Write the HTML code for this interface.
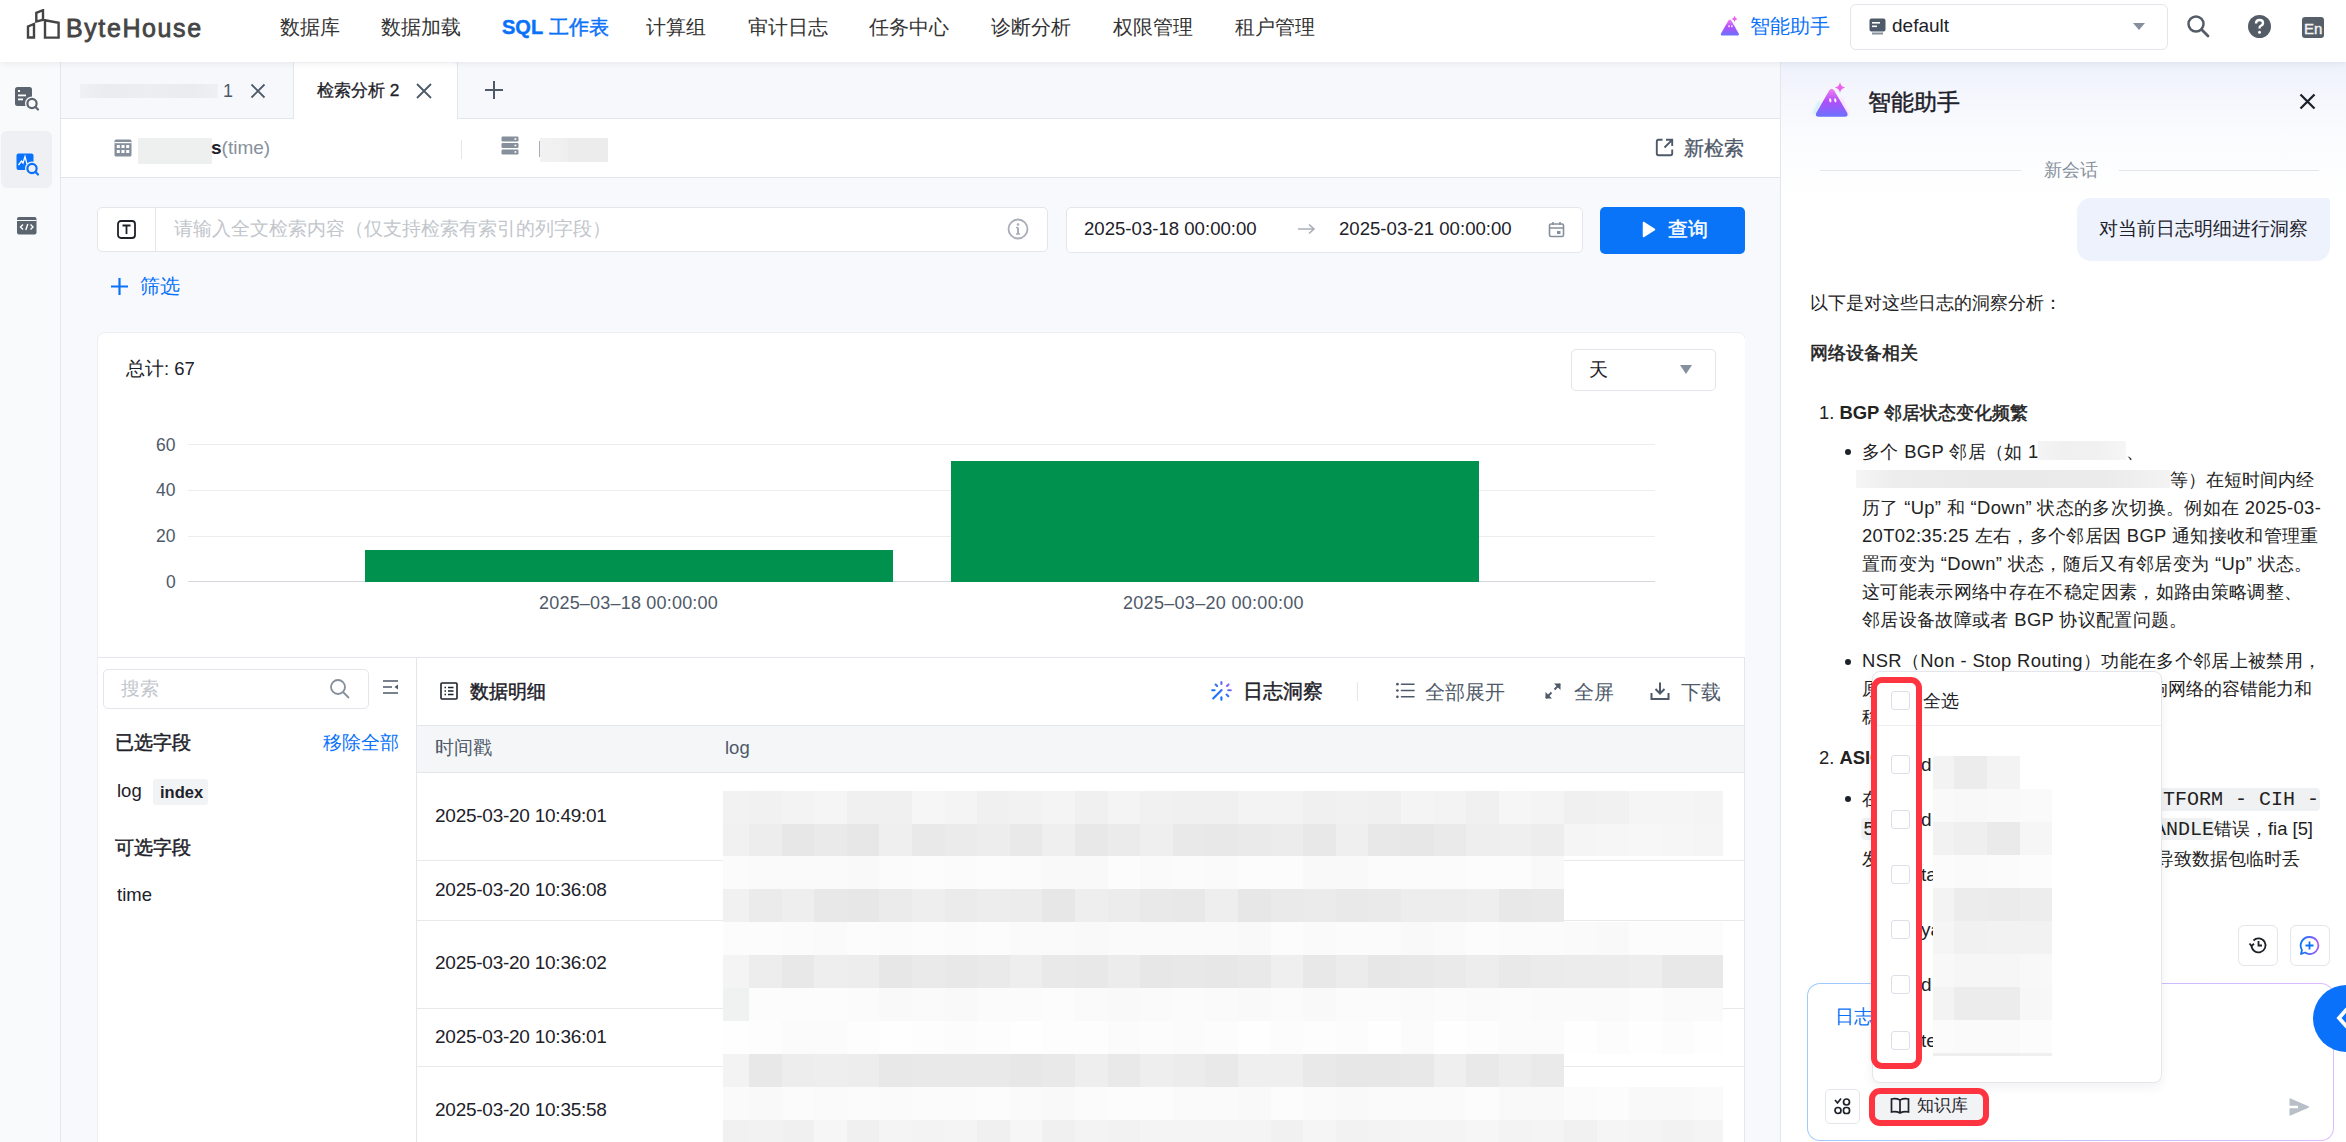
<!DOCTYPE html>
<html><head><meta charset="utf-8">
<style>
*{box-sizing:border-box;margin:0;padding:0}
html,body{width:2346px;height:1142px;overflow:hidden}
body{position:relative;background:#f7f9fc;font-family:"Liberation Sans",sans-serif;color:#1d2129}
.a{position:absolute}
.t{position:absolute;white-space:nowrap;line-height:1}
svg{display:block;position:absolute}
.mz div{position:absolute}
</style></head><body>

<!-- TOP NAV -->
<div class="a" style="left:0;top:0;width:2346px;height:62px;background:#fff;box-shadow:0 2px 6px rgba(0,0,0,0.06);z-index:5">
  <svg style="left:26px;top:9px" width="34" height="30" viewBox="0 0 34 30">
    <path d="M2 28.5V17.5L8 15V28.5Z M10.3 12.5 V3.8 L17 1.2 V10.8 Z M19 11.3 L32.6 13.8 V28.6 H19 Z" fill="none" stroke="#444" stroke-width="2.4"/>
  </svg>
  <div class="t" style="left:66px;top:15.5px;font-size:25px;color:#454545;-webkit-text-stroke:0.8px #454545;letter-spacing:1.6px">ByteHouse</div>
  <div class="t" style="left:280px;top:17px;font-size:20px;color:#333">数据库</div>
  <div class="t" style="left:381px;top:17px;font-size:20px;color:#333">数据加载</div>
  <div class="t" style="left:502px;top:17px;font-size:20px;color:#0a72fa;font-weight:normal;-webkit-text-stroke:0.45px currentColor"><b>SQL</b> 工作表</div>
  <div class="t" style="left:646px;top:17px;font-size:20px;color:#333">计算组</div>
  <div class="t" style="left:748px;top:17px;font-size:20px;color:#333">审计日志</div>
  <div class="t" style="left:869px;top:17px;font-size:20px;color:#333">任务中心</div>
  <div class="t" style="left:991px;top:17px;font-size:20px;color:#333">诊断分析</div>
  <div class="t" style="left:1113px;top:17px;font-size:20px;color:#333">权限管理</div>
  <div class="t" style="left:1235px;top:17px;font-size:20px;color:#333">租户管理</div>

  <svg style="left:1718px;top:14px" width="24" height="24" viewBox="0 0 42 40">
    <defs><linearGradient id="lg1" x1="0" y1="0" x2="0" y2="1"><stop offset="0" stop-color="#f27ef2"/><stop offset="0.45" stop-color="#b24ef8"/><stop offset="1" stop-color="#6a72ff"/></linearGradient></defs>
    <path d="M18.2 10.5 Q20.7 6.8 23.2 10.5 L36 32.5 Q38 36.7 33.5 36.7 H8 Q3.5 36.7 5.5 32.5 Z" fill="url(#lg1)"/>
    <ellipse cx="19.3" cy="20.3" rx="1.1" ry="2.1" fill="#fff"/><ellipse cx="24.3" cy="20.3" rx="1.1" ry="2.1" fill="#fff"/>
    <path d="M29 2.2 Q29.8 6.8 34.3 7.6 Q29.8 8.4 29 13 Q28.2 8.4 23.7 7.6 Q28.2 6.8 29 2.2Z" fill="#ec5ef0"/>
  </svg>
  <div class="t" style="left:1750px;top:16px;font-size:20px;color:#0a72fa">智能助手</div>

  <div class="a" style="left:1850px;top:4px;width:318px;height:46px;border:1px solid #e5e6eb;border-radius:6px;background:#fff"></div>
  <svg style="left:1869px;top:18px" width="17" height="17" viewBox="0 0 17 17"><rect x="0.5" y="0.5" width="16" height="13" rx="2" fill="#4e5969"/><rect x="3" y="4" width="8" height="1.6" fill="#fff"/><rect x="3" y="7.5" width="5" height="1.6" fill="#fff"/><rect x="3" y="14.5" width="11" height="2" fill="#86909c"/></svg>
  <div class="t" style="left:1892px;top:16px;font-size:19px;color:#1d2129">default</div>
  <svg style="left:2132px;top:22px" width="14" height="9" viewBox="0 0 14 9"><path d="M1 1H13L7 8Z" fill="#86909c"/></svg>

  <svg style="left:2186px;top:14px" width="26" height="26" viewBox="0 0 26 26"><circle cx="10" cy="10" r="7.5" fill="none" stroke="#545d67" stroke-width="2.5"/><path d="M15.5 15.5 L22 22" stroke="#545d67" stroke-width="2.8" stroke-linecap="round"/></svg>
  <svg style="left:2247px;top:14px" width="25" height="25" viewBox="0 0 25 25"><circle cx="12.5" cy="12.5" r="11.5" fill="#545d67"/><path d="M9 9.5 Q9 6 12.5 6 Q16 6 16 9 Q16 11 13.5 12 Q12.5 12.5 12.5 14.5" fill="none" stroke="#fff" stroke-width="2.4"/><circle cx="12.5" cy="18.3" r="1.5" fill="#fff"/></svg>
  <div class="a" style="left:2302px;top:17px;width:22px;height:21px;background:#565f69;border-radius:3px"></div>
  <div class="t" style="left:2304px;top:21px;font-size:15px;color:#f4f4f4;-webkit-text-stroke:0.4px #f4f4f4">En</div>
</div>

<!-- LEFT SIDEBAR -->
<div class="a" style="left:0;top:62px;width:61px;height:1080px;background:#f9fafb;border-right:1px solid #e5e6eb"></div>
<svg style="left:14px;top:86px" width="26" height="26" viewBox="0 0 26 26">
  <rect x="1" y="1" width="17" height="19" rx="2.5" fill="#5c6470"/>
  <rect x="4" y="4" width="2" height="2" fill="#fff"/><rect x="4" y="8.5" width="8" height="1.8" fill="#fff"/><rect x="4" y="12.5" width="5" height="1.8" fill="#fff"/>
  <circle cx="18" cy="17.5" r="7" fill="#f9fafb"/><circle cx="18" cy="17.5" r="4.6" fill="none" stroke="#5c6470" stroke-width="2.2"/><path d="M21.3 20.8 L24 23.5" stroke="#5c6470" stroke-width="2.2" stroke-linecap="round"/>
</svg>
<div class="a" style="left:1px;top:131px;width:51px;height:57px;background:#eef0f4;border-radius:6px"></div>
<svg style="left:15px;top:152px" width="26" height="26" viewBox="0 0 26 26">
  <rect x="1.5" y="1.5" width="17" height="16.5" rx="2" fill="#0a72fa"/>
  <path d="M3.5 13 L6.5 9 L8 11 L10 4.5 L12 12" fill="none" stroke="#fff" stroke-width="1.3"/>
  <circle cx="17" cy="16.5" r="7" fill="#eef0f4"/><circle cx="17" cy="16.5" r="4.6" fill="none" stroke="#0a72fa" stroke-width="2.2"/><path d="M20.3 19.8 L23 22.5" stroke="#0a72fa" stroke-width="2.2" stroke-linecap="round"/>
</svg>
<svg style="left:16px;top:216px" width="22" height="20" viewBox="0 0 22 20">
  <rect x="1" y="1" width="19.5" height="17.5" rx="2" fill="#5c6470"/>
  <rect x="1" y="4" width="19.5" height="1" fill="#f9fafb"/>
  <path d="M7 8.5 L4.5 11 L7 13.5 M14.5 8.5 L17 11 L14.5 13.5 M11.8 8 L9.8 14" fill="none" stroke="#fff" stroke-width="1.4"/>
</svg>

<!-- TABS -->
<div class="a" style="left:61px;top:62px;width:1719px;height:57px;background:#f6f8fb;border-bottom:1px solid #e2e5ea"></div>
<div class="a" style="left:294px;top:63px;width:164px;height:57px;background:#fff;border-radius:0 6px 0 0"></div>
<div class="a" style="left:293px;top:62px;width:1px;height:57px;background:#e5e6eb"></div>
<div class="a" style="left:457px;top:62px;width:1px;height:57px;background:#e5e6eb"></div>
<div class="a" style="left:80px;top:84px;width:138px;height:14px;background:linear-gradient(90deg,#eff1f4,#e9ebee 20%,#eceef1 50%,#e9ebef 80%,#eef0f3)"></div>
<div class="t" style="left:223px;top:82px;font-size:18px;color:#4e5969">1</div>
<svg style="left:250px;top:83px" width="16" height="16" viewBox="0 0 16 16"><path d="M1.5 1.5 L14.5 14.5 M14.5 1.5 L1.5 14.5" stroke="#4e5969" stroke-width="1.8"/></svg>
<div class="t" style="left:317px;top:82px;font-size:17.3px;color:#1d2129;-webkit-text-stroke:0.3px currentColor">检索分析 2</div>
<svg style="left:416px;top:83px" width="16" height="16" viewBox="0 0 16 16"><path d="M1 1 L15 15 M15 1 L1 15" stroke="#4e5969" stroke-width="1.8"/></svg>
<svg style="left:484px;top:80px" width="20" height="20" viewBox="0 0 20 20"><path d="M10 1 V19 M1 10 H19" stroke="#4e5969" stroke-width="2"/></svg>

<!-- ROW 2 -->
<div class="a" style="left:61px;top:119px;width:1719px;height:59px;background:#fff;border-bottom:1px solid #e2e5ea"></div>
<svg style="left:114px;top:139px" width="18" height="18" viewBox="0 0 18 18"><rect x="0.5" y="0.5" width="17" height="17" rx="1.5" fill="#86909c"/><rect x="0.5" y="3" width="17" height="1.2" fill="#fff"/><g fill="#fff"><rect x="2.8" y="6" width="3" height="3"/><rect x="7.5" y="6" width="3" height="3"/><rect x="12.2" y="6" width="3" height="3"/><rect x="2.8" y="11" width="3" height="3"/><rect x="7.5" y="11" width="3" height="3"/><rect x="12.2" y="11" width="3" height="3"/></g></svg>
<div class="a" style="left:138px;top:138px;width:74px;height:26px;background:#eeefef"></div>
<div class="t" style="left:211px;top:138px;font-size:19px;color:#1d2129;font-weight:bold">s<span style="font-weight:normal;color:#86909c">(time)</span></div>
<div class="a" style="left:461px;top:140px;width:1px;height:19px;background:#e5e6eb"></div>
<svg style="left:501px;top:136px" width="18" height="19" viewBox="0 0 18 19"><g fill="#86909c"><rect x="0.5" y="0.5" width="17" height="5" rx="1.2"/><rect x="0.5" y="7" width="17" height="5" rx="1.2"/><rect x="0.5" y="13.5" width="17" height="5" rx="1.2"/></g><g fill="#fff"><rect x="13.5" y="2.2" width="1.8" height="1.6"/><rect x="13.5" y="8.7" width="1.8" height="1.6"/><rect x="13.5" y="15.2" width="1.8" height="1.6"/></g></svg>
<div class="a" style="left:539px;top:141px;width:1px;height:16px;background:#a9aeb6"></div>
<div class="a" style="left:540px;top:138px;width:68px;height:24px;background:linear-gradient(90deg,#f2f2f2,#efefef 40%,#ececec 41%,#ececec)"></div>
<svg style="left:1655px;top:138px" width="19" height="19" viewBox="0 0 19 19"><path d="M7.5 1.8 H3.5 Q1.8 1.8 1.8 3.5 V15.5 Q1.8 17.2 3.5 17.2 H15.5 Q17.2 17.2 17.2 15.5 V11.5" fill="none" stroke="#4e5969" stroke-width="1.9"/><path d="M11 1.8 H17.2 V8 M17.2 1.8 L9.5 9.5" fill="none" stroke="#4e5969" stroke-width="1.9"/></svg>
<div class="t" style="left:1684px;top:138px;font-size:20px;color:#4e5969;-webkit-text-stroke:0.3px currentColor">新检索</div>
<!-- SEARCH ROW -->
<div class="a" style="left:97px;top:207px;width:951px;height:45px;background:#fff;border:1px solid #e5e6eb;border-radius:5px"></div>
<div class="a" style="left:155px;top:208px;width:1px;height:43px;background:#e5e6eb"></div>
<svg style="left:117px;top:220px" width="19" height="19" viewBox="0 0 19 19"><rect x="1" y="1" width="17" height="17" rx="3" fill="none" stroke="#1d2129" stroke-width="1.8"/><path d="M5.5 5.5 H13.5 M9.5 5.5 V14" stroke="#1d2129" stroke-width="1.8"/></svg>
<div class="t" style="left:174px;top:220px;font-size:18.5px;color:#c2c6cc">请输入全文检索内容（仅支持检索有索引的列字段）</div>
<svg style="left:1007px;top:218px" width="22" height="22" viewBox="0 0 22 22"><circle cx="11" cy="11" r="9.5" fill="none" stroke="#a9aeb8" stroke-width="1.8"/><circle cx="11" cy="6.5" r="1.3" fill="#a9aeb8"/><path d="M11 9.5 V16" stroke="#a9aeb8" stroke-width="2"/><path d="M9 9.5 H11 M9 16 H13" stroke="#a9aeb8" stroke-width="1.5"/></svg>

<div class="a" style="left:1066px;top:207px;width:517px;height:46px;background:#fff;border:1px solid #e5e6eb;border-radius:5px"></div>
<div class="t" style="left:1084px;top:220px;font-size:18.6px;color:#1d2129">2025-03-18 00:00:00</div>
<svg style="left:1297px;top:222px" width="19" height="14" viewBox="0 0 19 14"><path d="M1 7 H17 M12 2.5 L17 7 L12 11.5" fill="none" stroke="#a9aeb8" stroke-width="1.6"/></svg>
<div class="t" style="left:1339px;top:220px;font-size:18.6px;color:#1d2129">2025-03-21 00:00:00</div>
<svg style="left:1548px;top:221px" width="17" height="17" viewBox="0 0 17 17"><rect x="1.5" y="3" width="14" height="12.5" rx="1.5" fill="none" stroke="#86909c" stroke-width="1.6"/><path d="M1.5 7 H15.5 M5 1 V4 M12 1 V4" stroke="#86909c" stroke-width="1.6"/><rect x="9" y="10" width="3.5" height="3" fill="#86909c"/></svg>

<div class="a" style="left:1600px;top:207px;width:145px;height:47px;background:#0a74f8;border-radius:5px"></div>
<svg style="left:1642px;top:221px" width="14" height="17" viewBox="0 0 14 17"><path d="M1.5 1.5 L12.5 8.5 L1.5 15.5 Z" fill="#fff" stroke="#fff" stroke-width="1.5" stroke-linejoin="round"/></svg>
<div class="t" style="left:1668px;top:219px;font-size:20px;color:#fff;font-weight:normal;-webkit-text-stroke:0.45px currentColor">查询</div>

<svg style="left:110px;top:277px" width="19" height="19" viewBox="0 0 19 19"><path d="M9.5 1 V18 M1 9.5 H18" stroke="#0a72fa" stroke-width="2.2"/></svg>
<div class="t" style="left:140px;top:276px;font-size:20px;color:#0a72fa">筛选</div>

<!-- MAIN CARD -->
<div class="a" style="left:97px;top:332px;width:1649px;height:830px;background:#fff;border:1px solid #eceef2;border-radius:8px"></div>
<div class="t" style="left:126px;top:360px;font-size:18.5px;color:#1d2129">总计: 67</div>
<div class="a" style="left:1571px;top:349px;width:145px;height:42px;background:#fff;border:1px solid #e5e6eb;border-radius:5px"></div>
<div class="t" style="left:1589px;top:360px;font-size:19px;color:#1d2129">天</div>
<svg style="left:1679px;top:364px" width="14" height="11" viewBox="0 0 14 11"><path d="M1 1H13L7 10Z" fill="#86909c"/></svg>

<!-- CHART -->
<div class="a" style="left:188px;top:444px;width:1467px;height:1px;background:#ebedf0"></div>
<div class="a" style="left:188px;top:490px;width:1467px;height:1px;background:#ebedf0"></div>
<div class="a" style="left:188px;top:536px;width:1467px;height:1px;background:#ebedf0"></div>
<div class="a" style="left:188px;top:581px;width:1467px;height:1px;background:#d5d8e0"></div>
<div class="t" style="left:156px;top:437px;font-size:17.5px;color:#4e5969">60</div>
<div class="t" style="left:156px;top:482px;font-size:17.5px;color:#4e5969">40</div>
<div class="t" style="left:156px;top:528px;font-size:17.5px;color:#4e5969">20</div>
<div class="t" style="left:166px;top:574px;font-size:17.5px;color:#4e5969">0</div>
<div class="a" style="left:365px;top:550px;width:528px;height:32px;background:#00914e"></div>
<div class="a" style="left:951px;top:461px;width:528px;height:121px;background:#00914e"></div>
<div class="t" style="left:539px;top:594px;font-size:18px;color:#4e5969;letter-spacing:0.2px">2025–03–18 00:00:00</div>
<div class="t" style="left:1123px;top:594px;font-size:18px;color:#4e5969;letter-spacing:0.3px">2025–03–20 00:00:00</div>

<!-- BOTTOM -->
<div class="a" style="left:98px;top:657px;width:1647px;height:1px;background:#e5e6eb"></div>
<div class="a" style="left:416px;top:658px;width:1px;height:484px;background:#e5e6eb"></div>
<div class="a" style="left:103px;top:669px;width:266px;height:40px;background:#fff;border:1px solid #e5e6eb;border-radius:5px"></div>
<div class="t" style="left:121px;top:680px;font-size:18.5px;color:#c2c6cc">搜索</div>
<svg style="left:329px;top:678px" width="22" height="22" viewBox="0 0 22 22"><circle cx="9" cy="9" r="7" fill="none" stroke="#86909c" stroke-width="1.8"/><path d="M14 14 L20 20" stroke="#86909c" stroke-width="1.8"/></svg>
<svg style="left:382px;top:679px" width="17" height="16" viewBox="0 0 17 16"><path d="M1 2 H16 M1 8 H10 M1 14 H16" stroke="#4e5969" stroke-width="1.6"/><path d="M16 5.5 L12.5 8 L16 10.5Z" fill="#4e5969"/></svg>
<div class="t" style="left:115px;top:734px;font-size:18.5px;color:#1d2129;font-weight:normal;-webkit-text-stroke:0.45px currentColor">已选字段</div>
<div class="t" style="left:323px;top:734px;font-size:18.5px;color:#0a72fa">移除全部</div>
<div class="t" style="left:117px;top:782px;font-size:18.5px;color:#1d2129">log</div>
<div class="a" style="left:153px;top:779px;width:55px;height:26px;background:#f2f3f5;border-radius:3px"></div>
<div class="t" style="left:160px;top:784px;font-size:16.5px;color:#1d2129;font-weight:bold">index</div>
<div class="t" style="left:115px;top:839px;font-size:18.5px;color:#1d2129;font-weight:normal;-webkit-text-stroke:0.45px currentColor">可选字段</div>
<div class="t" style="left:117px;top:886px;font-size:18.5px;color:#1d2129">time</div>

<svg style="left:440px;top:682px" width="18" height="18" viewBox="0 0 18 18"><rect x="1" y="1" width="16" height="16" rx="1" fill="none" stroke="#1d2129" stroke-width="1.6"/><path d="M4.5 5.5 H6 M8 5.5 H13.5 M4.5 9 H6 M8 9 H13.5 M4.5 12.5 H6 M8 12.5 H13.5" stroke="#1d2129" stroke-width="1.5"/></svg>
<div class="t" style="left:470px;top:682px;font-size:19px;color:#1d2129;font-weight:normal;-webkit-text-stroke:0.45px currentColor">数据明细</div>

<svg style="left:1209px;top:679px" width="24" height="24" viewBox="0 0 24 24">
  <defs><linearGradient id="lg2" gradientUnits="userSpaceOnUse" x1="4" y1="20" x2="22" y2="4"><stop offset="0" stop-color="#0a72fa"/><stop offset="0.5" stop-color="#2f6ef8"/><stop offset="1" stop-color="#b060f6"/></linearGradient></defs>
  <g stroke="url(#lg2)" stroke-width="2.1" stroke-linecap="round" fill="none"><path d="M12.4 3 V5"/><path d="M6.6 5.6 L8.1 7.1"/><path d="M19.6 5.4 L18 7"/><path d="M3.2 11.2 H5.6"/><path d="M19.2 11.2 H21.8"/><path d="M17.6 15.6 L19.3 17.3"/><path d="M12.4 18.2 V20.8"/><path d="M4.2 19.4 L12.6 11"/></g>
</svg>
<div class="t" style="left:1243px;top:682px;font-size:19.5px;color:#1d2129;font-weight:normal;-webkit-text-stroke:0.45px currentColor">日志洞察</div>
<div class="a" style="left:1357px;top:682px;width:1px;height:19px;background:#e5e6eb"></div>
<svg style="left:1396px;top:682px" width="19" height="17" viewBox="0 0 19 17"><g fill="#4e5969"><circle cx="1.4" cy="2.2" r="1.35"/><circle cx="1.4" cy="8.5" r="1.35"/><circle cx="1.4" cy="14.8" r="1.35"/></g><path d="M5.5 2.2 H18 M5.5 8.5 H18 M5.5 14.8 H18" stroke="#4e5969" stroke-width="1.6" stroke-linecap="round"/></svg>
<div class="t" style="left:1425px;top:682px;font-size:20px;color:#4e5969">全部展开</div>
<svg style="left:1544px;top:682px" width="18" height="18" viewBox="0 0 18 18"><path d="M10.5 7.5 L16 2 M2 16 L7.5 10.5" stroke="#4e5969" stroke-width="1.8"/><path d="M10 1.5 H16.5 V8 Z M1.5 10 V16.5 H8 Z" fill="#4e5969"/></svg>
<div class="t" style="left:1574px;top:682px;font-size:20px;color:#4e5969">全屏</div>
<svg style="left:1650px;top:681px" width="20" height="20" viewBox="0 0 20 20"><path d="M10 1.5 V12.5 M5.5 8 L10 12.5 L14.5 8 M1.5 12 V18 H18.5 V12" fill="none" stroke="#4e5969" stroke-width="2"/></svg>
<div class="t" style="left:1681px;top:682px;font-size:20px;color:#4e5969">下载</div>

<div class="a" style="left:417px;top:725px;width:1328px;height:48px;background:#f5f6f8;border-top:1px solid #e5e6eb;border-bottom:1px solid #e5e6eb"></div>
<div class="t" style="left:435px;top:739px;font-size:18.5px;color:#4e5969">时间戳</div>
<div class="t" style="left:725px;top:739px;font-size:18.5px;color:#4e5969">log</div>
<div class="a" style="left:417px;top:860px;width:1328px;height:1px;background:#e8e9ec"></div>
<div class="a" style="left:417px;top:920px;width:1328px;height:1px;background:#e8e9ec"></div>
<div class="a" style="left:417px;top:1008px;width:1328px;height:1px;background:#e8e9ec"></div>
<div class="a" style="left:417px;top:1066px;width:1328px;height:1px;background:#e8e9ec"></div>
<div class="t" style="left:435px;top:806px;font-size:19px;color:#1d2129;letter-spacing:-0.25px">2025-03-20 10:49:01</div>
<div class="t" style="left:435px;top:880px;font-size:19px;color:#1d2129;letter-spacing:-0.25px">2025-03-20 10:36:08</div>
<div class="t" style="left:435px;top:953px;font-size:19px;color:#1d2129;letter-spacing:-0.25px">2025-03-20 10:36:02</div>
<div class="t" style="left:435px;top:1027px;font-size:19px;color:#1d2129;letter-spacing:-0.25px">2025-03-20 10:36:01</div>
<div class="t" style="left:435px;top:1100px;font-size:19px;color:#1d2129;letter-spacing:-0.25px">2025-03-20 10:35:58</div>
<div class="a" style="left:1745px;top:178px;width:35px;height:964px;background:#f7f9fc"></div>
<div class="a" style="left:1744px;top:657px;width:1px;height:485px;background:#e5e6eb"></div>
<div class="mz">
<div style="left:723px;top:791px;width:26px;height:33px;background:rgb(242,242,243)"></div>
<div style="left:749px;top:791px;width:33px;height:33px;background:rgb(241,241,242)"></div>
<div style="left:782px;top:791px;width:33px;height:33px;background:rgb(243,243,244)"></div>
<div style="left:814px;top:791px;width:33px;height:33px;background:rgb(245,245,246)"></div>
<div style="left:847px;top:791px;width:33px;height:33px;background:rgb(240,240,241)"></div>
<div style="left:879px;top:791px;width:33px;height:33px;background:rgb(240,240,241)"></div>
<div style="left:912px;top:791px;width:33px;height:33px;background:rgb(246,246,247)"></div>
<div style="left:945px;top:791px;width:33px;height:33px;background:rgb(244,244,245)"></div>
<div style="left:977px;top:791px;width:33px;height:33px;background:rgb(240,240,241)"></div>
<div style="left:1010px;top:791px;width:33px;height:33px;background:rgb(242,242,243)"></div>
<div style="left:1042px;top:791px;width:33px;height:33px;background:rgb(244,244,245)"></div>
<div style="left:1075px;top:791px;width:33px;height:33px;background:rgb(240,240,241)"></div>
<div style="left:1108px;top:791px;width:33px;height:33px;background:rgb(244,244,245)"></div>
<div style="left:1140px;top:791px;width:33px;height:33px;background:rgb(241,241,242)"></div>
<div style="left:1173px;top:791px;width:33px;height:33px;background:rgb(240,240,241)"></div>
<div style="left:1205px;top:791px;width:33px;height:33px;background:rgb(240,240,241)"></div>
<div style="left:1238px;top:791px;width:33px;height:33px;background:rgb(243,243,244)"></div>
<div style="left:1271px;top:791px;width:33px;height:33px;background:rgb(243,243,244)"></div>
<div style="left:1303px;top:791px;width:33px;height:33px;background:rgb(240,240,241)"></div>
<div style="left:1336px;top:791px;width:33px;height:33px;background:rgb(241,241,242)"></div>
<div style="left:1368px;top:791px;width:33px;height:33px;background:rgb(240,240,241)"></div>
<div style="left:1401px;top:791px;width:33px;height:33px;background:rgb(244,244,245)"></div>
<div style="left:1434px;top:791px;width:33px;height:33px;background:rgb(243,243,244)"></div>
<div style="left:1466px;top:791px;width:33px;height:33px;background:rgb(240,240,241)"></div>
<div style="left:1499px;top:791px;width:33px;height:33px;background:rgb(246,246,247)"></div>
<div style="left:1531px;top:791px;width:33px;height:33px;background:rgb(244,244,245)"></div>
<div style="left:1564px;top:791px;width:33px;height:33px;background:rgb(240,240,241)"></div>
<div style="left:1597px;top:791px;width:33px;height:33px;background:rgb(241,241,242)"></div>
<div style="left:1629px;top:791px;width:33px;height:33px;background:rgb(245,245,246)"></div>
<div style="left:1662px;top:791px;width:33px;height:33px;background:rgb(245,245,246)"></div>
<div style="left:1694px;top:791px;width:29px;height:33px;background:rgb(244,244,245)"></div>
<div style="left:723px;top:824px;width:26px;height:32px;background:rgb(241,241,242)"></div>
<div style="left:749px;top:824px;width:33px;height:32px;background:rgb(237,237,238)"></div>
<div style="left:782px;top:824px;width:33px;height:32px;background:rgb(231,231,232)"></div>
<div style="left:814px;top:824px;width:33px;height:32px;background:rgb(234,234,235)"></div>
<div style="left:847px;top:824px;width:33px;height:32px;background:rgb(231,231,232)"></div>
<div style="left:879px;top:824px;width:33px;height:32px;background:rgb(239,239,240)"></div>
<div style="left:912px;top:824px;width:33px;height:32px;background:rgb(233,233,234)"></div>
<div style="left:945px;top:824px;width:33px;height:32px;background:rgb(235,235,236)"></div>
<div style="left:977px;top:824px;width:33px;height:32px;background:rgb(237,237,238)"></div>
<div style="left:1010px;top:824px;width:33px;height:32px;background:rgb(233,233,234)"></div>
<div style="left:1042px;top:824px;width:33px;height:32px;background:rgb(239,239,240)"></div>
<div style="left:1075px;top:824px;width:33px;height:32px;background:rgb(232,232,233)"></div>
<div style="left:1108px;top:824px;width:33px;height:32px;background:rgb(235,235,236)"></div>
<div style="left:1140px;top:824px;width:33px;height:32px;background:rgb(239,239,240)"></div>
<div style="left:1173px;top:824px;width:33px;height:32px;background:rgb(233,233,234)"></div>
<div style="left:1205px;top:824px;width:33px;height:32px;background:rgb(232,232,233)"></div>
<div style="left:1238px;top:824px;width:33px;height:32px;background:rgb(234,234,235)"></div>
<div style="left:1271px;top:824px;width:33px;height:32px;background:rgb(236,236,237)"></div>
<div style="left:1303px;top:824px;width:33px;height:32px;background:rgb(232,232,233)"></div>
<div style="left:1336px;top:824px;width:33px;height:32px;background:rgb(239,239,240)"></div>
<div style="left:1368px;top:824px;width:33px;height:32px;background:rgb(232,232,233)"></div>
<div style="left:1401px;top:824px;width:33px;height:32px;background:rgb(231,231,232)"></div>
<div style="left:1434px;top:824px;width:33px;height:32px;background:rgb(234,234,235)"></div>
<div style="left:1466px;top:824px;width:33px;height:32px;background:rgb(238,238,239)"></div>
<div style="left:1499px;top:824px;width:33px;height:32px;background:rgb(239,239,240)"></div>
<div style="left:1531px;top:824px;width:33px;height:32px;background:rgb(237,237,238)"></div>
<div style="left:1564px;top:824px;width:33px;height:32px;background:rgb(245,245,246)"></div>
<div style="left:1597px;top:824px;width:33px;height:32px;background:rgb(246,246,247)"></div>
<div style="left:1629px;top:824px;width:33px;height:32px;background:rgb(247,247,248)"></div>
<div style="left:1662px;top:824px;width:33px;height:32px;background:rgb(246,246,247)"></div>
<div style="left:1694px;top:824px;width:29px;height:32px;background:rgb(245,245,246)"></div>
<div style="left:723px;top:856px;width:26px;height:33px;background:rgb(251,251,252)"></div>
<div style="left:749px;top:856px;width:33px;height:33px;background:rgb(250,250,251)"></div>
<div style="left:782px;top:856px;width:33px;height:33px;background:rgb(250,250,251)"></div>
<div style="left:814px;top:856px;width:33px;height:33px;background:rgb(250,250,251)"></div>
<div style="left:847px;top:856px;width:33px;height:33px;background:rgb(249,249,250)"></div>
<div style="left:879px;top:856px;width:33px;height:33px;background:rgb(251,251,252)"></div>
<div style="left:912px;top:856px;width:33px;height:33px;background:rgb(252,252,253)"></div>
<div style="left:945px;top:856px;width:33px;height:33px;background:rgb(251,251,252)"></div>
<div style="left:977px;top:856px;width:33px;height:33px;background:rgb(252,252,253)"></div>
<div style="left:1010px;top:856px;width:33px;height:33px;background:rgb(251,251,252)"></div>
<div style="left:1042px;top:856px;width:33px;height:33px;background:rgb(249,249,250)"></div>
<div style="left:1075px;top:856px;width:33px;height:33px;background:rgb(249,249,250)"></div>
<div style="left:1108px;top:856px;width:33px;height:33px;background:rgb(252,252,253)"></div>
<div style="left:1140px;top:856px;width:33px;height:33px;background:rgb(250,250,251)"></div>
<div style="left:1173px;top:856px;width:33px;height:33px;background:rgb(251,251,252)"></div>
<div style="left:1205px;top:856px;width:33px;height:33px;background:rgb(250,250,251)"></div>
<div style="left:1238px;top:856px;width:33px;height:33px;background:rgb(252,252,253)"></div>
<div style="left:1271px;top:856px;width:33px;height:33px;background:rgb(252,252,253)"></div>
<div style="left:1303px;top:856px;width:33px;height:33px;background:rgb(249,249,250)"></div>
<div style="left:1336px;top:856px;width:33px;height:33px;background:rgb(249,249,250)"></div>
<div style="left:1368px;top:856px;width:33px;height:33px;background:rgb(251,251,252)"></div>
<div style="left:1401px;top:856px;width:33px;height:33px;background:rgb(251,251,252)"></div>
<div style="left:1434px;top:856px;width:33px;height:33px;background:rgb(251,251,252)"></div>
<div style="left:1466px;top:856px;width:33px;height:33px;background:rgb(252,252,253)"></div>
<div style="left:1499px;top:856px;width:33px;height:33px;background:rgb(252,252,253)"></div>
<div style="left:1531px;top:856px;width:33px;height:33px;background:rgb(249,249,250)"></div>
<div style="left:723px;top:889px;width:26px;height:33px;background:rgb(241,241,242)"></div>
<div style="left:749px;top:889px;width:33px;height:33px;background:rgb(235,235,236)"></div>
<div style="left:782px;top:889px;width:33px;height:33px;background:rgb(238,238,239)"></div>
<div style="left:814px;top:889px;width:33px;height:33px;background:rgb(232,232,233)"></div>
<div style="left:847px;top:889px;width:33px;height:33px;background:rgb(231,231,232)"></div>
<div style="left:879px;top:889px;width:33px;height:33px;background:rgb(235,235,236)"></div>
<div style="left:912px;top:889px;width:33px;height:33px;background:rgb(238,238,239)"></div>
<div style="left:945px;top:889px;width:33px;height:33px;background:rgb(235,235,236)"></div>
<div style="left:977px;top:889px;width:33px;height:33px;background:rgb(237,237,238)"></div>
<div style="left:1010px;top:889px;width:33px;height:33px;background:rgb(236,236,237)"></div>
<div style="left:1042px;top:889px;width:33px;height:33px;background:rgb(231,231,232)"></div>
<div style="left:1075px;top:889px;width:33px;height:33px;background:rgb(238,238,239)"></div>
<div style="left:1108px;top:889px;width:33px;height:33px;background:rgb(236,236,237)"></div>
<div style="left:1140px;top:889px;width:33px;height:33px;background:rgb(233,233,234)"></div>
<div style="left:1173px;top:889px;width:33px;height:33px;background:rgb(232,232,233)"></div>
<div style="left:1205px;top:889px;width:33px;height:33px;background:rgb(238,238,239)"></div>
<div style="left:1238px;top:889px;width:33px;height:33px;background:rgb(231,231,232)"></div>
<div style="left:1271px;top:889px;width:33px;height:33px;background:rgb(234,234,235)"></div>
<div style="left:1303px;top:889px;width:33px;height:33px;background:rgb(235,235,236)"></div>
<div style="left:1336px;top:889px;width:33px;height:33px;background:rgb(233,233,234)"></div>
<div style="left:1368px;top:889px;width:33px;height:33px;background:rgb(234,234,235)"></div>
<div style="left:1401px;top:889px;width:33px;height:33px;background:rgb(237,237,238)"></div>
<div style="left:1434px;top:889px;width:33px;height:33px;background:rgb(237,237,238)"></div>
<div style="left:1466px;top:889px;width:33px;height:33px;background:rgb(238,238,239)"></div>
<div style="left:1499px;top:889px;width:33px;height:33px;background:rgb(232,232,233)"></div>
<div style="left:1531px;top:889px;width:33px;height:33px;background:rgb(233,233,234)"></div>
<div style="left:723px;top:922px;width:26px;height:33px;background:rgb(252,252,253)"></div>
<div style="left:749px;top:922px;width:33px;height:33px;background:rgb(252,252,253)"></div>
<div style="left:782px;top:922px;width:33px;height:33px;background:rgb(251,251,252)"></div>
<div style="left:814px;top:922px;width:33px;height:33px;background:rgb(250,250,251)"></div>
<div style="left:847px;top:922px;width:33px;height:33px;background:rgb(252,252,253)"></div>
<div style="left:879px;top:922px;width:33px;height:33px;background:rgb(251,251,252)"></div>
<div style="left:912px;top:922px;width:33px;height:33px;background:rgb(252,252,253)"></div>
<div style="left:945px;top:922px;width:33px;height:33px;background:rgb(251,251,252)"></div>
<div style="left:977px;top:922px;width:33px;height:33px;background:rgb(252,252,253)"></div>
<div style="left:1010px;top:922px;width:33px;height:33px;background:rgb(250,250,251)"></div>
<div style="left:1042px;top:922px;width:33px;height:33px;background:rgb(250,250,251)"></div>
<div style="left:1075px;top:922px;width:33px;height:33px;background:rgb(249,249,250)"></div>
<div style="left:1108px;top:922px;width:33px;height:33px;background:rgb(250,250,251)"></div>
<div style="left:1140px;top:922px;width:33px;height:33px;background:rgb(250,250,251)"></div>
<div style="left:1173px;top:922px;width:33px;height:33px;background:rgb(250,250,251)"></div>
<div style="left:1205px;top:922px;width:33px;height:33px;background:rgb(250,250,251)"></div>
<div style="left:1238px;top:922px;width:33px;height:33px;background:rgb(249,249,250)"></div>
<div style="left:1271px;top:922px;width:33px;height:33px;background:rgb(252,252,253)"></div>
<div style="left:1303px;top:922px;width:33px;height:33px;background:rgb(250,250,251)"></div>
<div style="left:1336px;top:922px;width:33px;height:33px;background:rgb(251,251,252)"></div>
<div style="left:1368px;top:922px;width:33px;height:33px;background:rgb(251,251,252)"></div>
<div style="left:1401px;top:922px;width:33px;height:33px;background:rgb(249,249,250)"></div>
<div style="left:1434px;top:922px;width:33px;height:33px;background:rgb(250,250,251)"></div>
<div style="left:1466px;top:922px;width:33px;height:33px;background:rgb(252,252,253)"></div>
<div style="left:1499px;top:922px;width:33px;height:33px;background:rgb(251,251,252)"></div>
<div style="left:1531px;top:922px;width:33px;height:33px;background:rgb(251,251,252)"></div>
<div style="left:1564px;top:922px;width:33px;height:33px;background:rgb(250,250,251)"></div>
<div style="left:1597px;top:922px;width:33px;height:33px;background:rgb(249,249,250)"></div>
<div style="left:1629px;top:922px;width:33px;height:33px;background:rgb(252,252,253)"></div>
<div style="left:1662px;top:922px;width:33px;height:33px;background:rgb(252,252,253)"></div>
<div style="left:1694px;top:922px;width:29px;height:33px;background:rgb(252,252,253)"></div>
<div style="left:723px;top:955px;width:26px;height:33px;background:rgb(244,244,245)"></div>
<div style="left:749px;top:955px;width:33px;height:33px;background:rgb(237,237,238)"></div>
<div style="left:782px;top:955px;width:33px;height:33px;background:rgb(232,232,233)"></div>
<div style="left:814px;top:955px;width:33px;height:33px;background:rgb(238,238,239)"></div>
<div style="left:847px;top:955px;width:33px;height:33px;background:rgb(237,237,238)"></div>
<div style="left:879px;top:955px;width:33px;height:33px;background:rgb(231,231,232)"></div>
<div style="left:912px;top:955px;width:33px;height:33px;background:rgb(234,234,235)"></div>
<div style="left:945px;top:955px;width:33px;height:33px;background:rgb(232,232,233)"></div>
<div style="left:977px;top:955px;width:33px;height:33px;background:rgb(234,234,235)"></div>
<div style="left:1010px;top:955px;width:33px;height:33px;background:rgb(238,238,239)"></div>
<div style="left:1042px;top:955px;width:33px;height:33px;background:rgb(233,233,234)"></div>
<div style="left:1075px;top:955px;width:33px;height:33px;background:rgb(232,232,233)"></div>
<div style="left:1108px;top:955px;width:33px;height:33px;background:rgb(236,236,237)"></div>
<div style="left:1140px;top:955px;width:33px;height:33px;background:rgb(231,231,232)"></div>
<div style="left:1173px;top:955px;width:33px;height:33px;background:rgb(232,232,233)"></div>
<div style="left:1205px;top:955px;width:33px;height:33px;background:rgb(231,231,232)"></div>
<div style="left:1238px;top:955px;width:33px;height:33px;background:rgb(233,233,234)"></div>
<div style="left:1271px;top:955px;width:33px;height:33px;background:rgb(239,239,240)"></div>
<div style="left:1303px;top:955px;width:33px;height:33px;background:rgb(232,232,233)"></div>
<div style="left:1336px;top:955px;width:33px;height:33px;background:rgb(236,236,237)"></div>
<div style="left:1368px;top:955px;width:33px;height:33px;background:rgb(231,231,232)"></div>
<div style="left:1401px;top:955px;width:33px;height:33px;background:rgb(232,232,233)"></div>
<div style="left:1434px;top:955px;width:33px;height:33px;background:rgb(234,234,235)"></div>
<div style="left:1466px;top:955px;width:33px;height:33px;background:rgb(237,237,238)"></div>
<div style="left:1499px;top:955px;width:33px;height:33px;background:rgb(233,233,234)"></div>
<div style="left:1531px;top:955px;width:33px;height:33px;background:rgb(235,235,236)"></div>
<div style="left:1564px;top:955px;width:33px;height:33px;background:rgb(236,236,237)"></div>
<div style="left:1597px;top:955px;width:33px;height:33px;background:rgb(236,236,237)"></div>
<div style="left:1629px;top:955px;width:33px;height:33px;background:rgb(238,238,239)"></div>
<div style="left:1662px;top:955px;width:33px;height:33px;background:rgb(232,232,233)"></div>
<div style="left:1694px;top:955px;width:29px;height:33px;background:rgb(232,232,233)"></div>
<div style="left:723px;top:988px;width:26px;height:33px;background:rgb(252,252,253)"></div>
<div style="left:749px;top:988px;width:33px;height:33px;background:rgb(252,252,253)"></div>
<div style="left:782px;top:988px;width:33px;height:33px;background:rgb(252,252,253)"></div>
<div style="left:814px;top:988px;width:33px;height:33px;background:rgb(252,252,253)"></div>
<div style="left:847px;top:988px;width:33px;height:33px;background:rgb(251,251,252)"></div>
<div style="left:879px;top:988px;width:33px;height:33px;background:rgb(249,249,250)"></div>
<div style="left:912px;top:988px;width:33px;height:33px;background:rgb(250,250,251)"></div>
<div style="left:945px;top:988px;width:33px;height:33px;background:rgb(249,249,250)"></div>
<div style="left:977px;top:988px;width:33px;height:33px;background:rgb(251,251,252)"></div>
<div style="left:1010px;top:988px;width:33px;height:33px;background:rgb(251,251,252)"></div>
<div style="left:1042px;top:988px;width:33px;height:33px;background:rgb(252,252,253)"></div>
<div style="left:1075px;top:988px;width:33px;height:33px;background:rgb(250,250,251)"></div>
<div style="left:1108px;top:988px;width:33px;height:33px;background:rgb(249,249,250)"></div>
<div style="left:1140px;top:988px;width:33px;height:33px;background:rgb(250,250,251)"></div>
<div style="left:1173px;top:988px;width:33px;height:33px;background:rgb(251,251,252)"></div>
<div style="left:1205px;top:988px;width:33px;height:33px;background:rgb(250,250,251)"></div>
<div style="left:1238px;top:988px;width:33px;height:33px;background:rgb(249,249,250)"></div>
<div style="left:1271px;top:988px;width:33px;height:33px;background:rgb(251,251,252)"></div>
<div style="left:1303px;top:988px;width:33px;height:33px;background:rgb(249,249,250)"></div>
<div style="left:1336px;top:988px;width:33px;height:33px;background:rgb(251,251,252)"></div>
<div style="left:1368px;top:988px;width:33px;height:33px;background:rgb(251,251,252)"></div>
<div style="left:1401px;top:988px;width:33px;height:33px;background:rgb(250,250,251)"></div>
<div style="left:1434px;top:988px;width:33px;height:33px;background:rgb(251,251,252)"></div>
<div style="left:1466px;top:988px;width:33px;height:33px;background:rgb(250,250,251)"></div>
<div style="left:1499px;top:988px;width:33px;height:33px;background:rgb(251,251,252)"></div>
<div style="left:1531px;top:988px;width:33px;height:33px;background:rgb(250,250,251)"></div>
<div style="left:1564px;top:988px;width:33px;height:33px;background:rgb(250,250,251)"></div>
<div style="left:1597px;top:988px;width:33px;height:33px;background:rgb(250,250,251)"></div>
<div style="left:1629px;top:988px;width:33px;height:33px;background:rgb(252,252,253)"></div>
<div style="left:1662px;top:988px;width:33px;height:33px;background:rgb(250,250,251)"></div>
<div style="left:1694px;top:988px;width:29px;height:33px;background:rgb(250,250,251)"></div>
<div style="left:723px;top:1021px;width:26px;height:33px;background:rgb(254,254,255)"></div>
<div style="left:749px;top:1021px;width:33px;height:33px;background:rgb(253,253,254)"></div>
<div style="left:782px;top:1021px;width:33px;height:33px;background:rgb(251,251,252)"></div>
<div style="left:814px;top:1021px;width:33px;height:33px;background:rgb(251,251,252)"></div>
<div style="left:847px;top:1021px;width:33px;height:33px;background:rgb(253,253,254)"></div>
<div style="left:879px;top:1021px;width:33px;height:33px;background:rgb(254,254,255)"></div>
<div style="left:912px;top:1021px;width:33px;height:33px;background:rgb(253,253,254)"></div>
<div style="left:945px;top:1021px;width:33px;height:33px;background:rgb(252,252,253)"></div>
<div style="left:977px;top:1021px;width:33px;height:33px;background:rgb(253,253,254)"></div>
<div style="left:1010px;top:1021px;width:33px;height:33px;background:rgb(254,254,255)"></div>
<div style="left:1042px;top:1021px;width:33px;height:33px;background:rgb(253,253,254)"></div>
<div style="left:1075px;top:1021px;width:33px;height:33px;background:rgb(253,253,254)"></div>
<div style="left:1108px;top:1021px;width:33px;height:33px;background:rgb(251,251,252)"></div>
<div style="left:1140px;top:1021px;width:33px;height:33px;background:rgb(252,252,253)"></div>
<div style="left:1173px;top:1021px;width:33px;height:33px;background:rgb(251,251,252)"></div>
<div style="left:1205px;top:1021px;width:33px;height:33px;background:rgb(252,252,253)"></div>
<div style="left:1238px;top:1021px;width:33px;height:33px;background:rgb(254,254,255)"></div>
<div style="left:1271px;top:1021px;width:33px;height:33px;background:rgb(252,252,253)"></div>
<div style="left:1303px;top:1021px;width:33px;height:33px;background:rgb(253,253,254)"></div>
<div style="left:1336px;top:1021px;width:33px;height:33px;background:rgb(252,252,253)"></div>
<div style="left:1368px;top:1021px;width:33px;height:33px;background:rgb(254,254,255)"></div>
<div style="left:1401px;top:1021px;width:33px;height:33px;background:rgb(251,251,252)"></div>
<div style="left:1434px;top:1021px;width:33px;height:33px;background:rgb(254,254,255)"></div>
<div style="left:1466px;top:1021px;width:33px;height:33px;background:rgb(253,253,254)"></div>
<div style="left:1499px;top:1021px;width:33px;height:33px;background:rgb(251,251,252)"></div>
<div style="left:1531px;top:1021px;width:33px;height:33px;background:rgb(251,251,252)"></div>
<div style="left:1564px;top:1021px;width:33px;height:33px;background:rgb(254,254,255)"></div>
<div style="left:1597px;top:1021px;width:33px;height:33px;background:rgb(252,252,253)"></div>
<div style="left:1629px;top:1021px;width:33px;height:33px;background:rgb(254,254,255)"></div>
<div style="left:1662px;top:1021px;width:33px;height:33px;background:rgb(252,252,253)"></div>
<div style="left:1694px;top:1021px;width:29px;height:33px;background:rgb(254,254,255)"></div>
<div style="left:723px;top:1054px;width:26px;height:33px;background:rgb(243,243,244)"></div>
<div style="left:749px;top:1054px;width:33px;height:33px;background:rgb(232,232,233)"></div>
<div style="left:782px;top:1054px;width:33px;height:33px;background:rgb(237,237,238)"></div>
<div style="left:814px;top:1054px;width:33px;height:33px;background:rgb(238,238,239)"></div>
<div style="left:847px;top:1054px;width:33px;height:33px;background:rgb(237,237,238)"></div>
<div style="left:879px;top:1054px;width:33px;height:33px;background:rgb(232,232,233)"></div>
<div style="left:912px;top:1054px;width:33px;height:33px;background:rgb(233,233,234)"></div>
<div style="left:945px;top:1054px;width:33px;height:33px;background:rgb(233,233,234)"></div>
<div style="left:977px;top:1054px;width:33px;height:33px;background:rgb(233,233,234)"></div>
<div style="left:1010px;top:1054px;width:33px;height:33px;background:rgb(231,231,232)"></div>
<div style="left:1042px;top:1054px;width:33px;height:33px;background:rgb(233,233,234)"></div>
<div style="left:1075px;top:1054px;width:33px;height:33px;background:rgb(238,238,239)"></div>
<div style="left:1108px;top:1054px;width:33px;height:33px;background:rgb(233,233,234)"></div>
<div style="left:1140px;top:1054px;width:33px;height:33px;background:rgb(238,238,239)"></div>
<div style="left:1173px;top:1054px;width:33px;height:33px;background:rgb(236,236,237)"></div>
<div style="left:1205px;top:1054px;width:33px;height:33px;background:rgb(233,233,234)"></div>
<div style="left:1238px;top:1054px;width:33px;height:33px;background:rgb(239,239,240)"></div>
<div style="left:1271px;top:1054px;width:33px;height:33px;background:rgb(239,239,240)"></div>
<div style="left:1303px;top:1054px;width:33px;height:33px;background:rgb(233,233,234)"></div>
<div style="left:1336px;top:1054px;width:33px;height:33px;background:rgb(231,231,232)"></div>
<div style="left:1368px;top:1054px;width:33px;height:33px;background:rgb(231,231,232)"></div>
<div style="left:1401px;top:1054px;width:33px;height:33px;background:rgb(232,232,233)"></div>
<div style="left:1434px;top:1054px;width:33px;height:33px;background:rgb(239,239,240)"></div>
<div style="left:1466px;top:1054px;width:33px;height:33px;background:rgb(233,233,234)"></div>
<div style="left:1499px;top:1054px;width:33px;height:33px;background:rgb(237,237,238)"></div>
<div style="left:1531px;top:1054px;width:33px;height:33px;background:rgb(234,234,235)"></div>
<div style="left:723px;top:1087px;width:26px;height:33px;background:rgb(250,250,251)"></div>
<div style="left:749px;top:1087px;width:33px;height:33px;background:rgb(249,249,250)"></div>
<div style="left:782px;top:1087px;width:33px;height:33px;background:rgb(251,251,252)"></div>
<div style="left:814px;top:1087px;width:33px;height:33px;background:rgb(250,250,251)"></div>
<div style="left:847px;top:1087px;width:33px;height:33px;background:rgb(251,251,252)"></div>
<div style="left:879px;top:1087px;width:33px;height:33px;background:rgb(250,250,251)"></div>
<div style="left:912px;top:1087px;width:33px;height:33px;background:rgb(251,251,252)"></div>
<div style="left:945px;top:1087px;width:33px;height:33px;background:rgb(251,251,252)"></div>
<div style="left:977px;top:1087px;width:33px;height:33px;background:rgb(252,252,253)"></div>
<div style="left:1010px;top:1087px;width:33px;height:33px;background:rgb(250,250,251)"></div>
<div style="left:1042px;top:1087px;width:33px;height:33px;background:rgb(249,249,250)"></div>
<div style="left:1075px;top:1087px;width:33px;height:33px;background:rgb(251,251,252)"></div>
<div style="left:1108px;top:1087px;width:33px;height:33px;background:rgb(252,252,253)"></div>
<div style="left:1140px;top:1087px;width:33px;height:33px;background:rgb(252,252,253)"></div>
<div style="left:1173px;top:1087px;width:33px;height:33px;background:rgb(250,250,251)"></div>
<div style="left:1205px;top:1087px;width:33px;height:33px;background:rgb(250,250,251)"></div>
<div style="left:1238px;top:1087px;width:33px;height:33px;background:rgb(249,249,250)"></div>
<div style="left:1271px;top:1087px;width:33px;height:33px;background:rgb(252,252,253)"></div>
<div style="left:1303px;top:1087px;width:33px;height:33px;background:rgb(250,250,251)"></div>
<div style="left:1336px;top:1087px;width:33px;height:33px;background:rgb(249,249,250)"></div>
<div style="left:1368px;top:1087px;width:33px;height:33px;background:rgb(250,250,251)"></div>
<div style="left:1401px;top:1087px;width:33px;height:33px;background:rgb(250,250,251)"></div>
<div style="left:1434px;top:1087px;width:33px;height:33px;background:rgb(250,250,251)"></div>
<div style="left:1466px;top:1087px;width:33px;height:33px;background:rgb(252,252,253)"></div>
<div style="left:1499px;top:1087px;width:33px;height:33px;background:rgb(249,249,250)"></div>
<div style="left:1531px;top:1087px;width:33px;height:33px;background:rgb(249,249,250)"></div>
<div style="left:1564px;top:1087px;width:33px;height:33px;background:rgb(251,251,252)"></div>
<div style="left:1597px;top:1087px;width:33px;height:33px;background:rgb(252,252,253)"></div>
<div style="left:1629px;top:1087px;width:33px;height:33px;background:rgb(249,249,250)"></div>
<div style="left:1662px;top:1087px;width:33px;height:33px;background:rgb(249,249,250)"></div>
<div style="left:1694px;top:1087px;width:29px;height:33px;background:rgb(250,250,251)"></div>
<div style="left:723px;top:1120px;width:26px;height:22px;background:rgb(241,241,242)"></div>
<div style="left:749px;top:1120px;width:33px;height:22px;background:rgb(242,242,243)"></div>
<div style="left:782px;top:1120px;width:33px;height:22px;background:rgb(240,240,241)"></div>
<div style="left:814px;top:1120px;width:33px;height:22px;background:rgb(246,246,247)"></div>
<div style="left:847px;top:1120px;width:33px;height:22px;background:rgb(240,240,241)"></div>
<div style="left:879px;top:1120px;width:33px;height:22px;background:rgb(244,244,245)"></div>
<div style="left:912px;top:1120px;width:33px;height:22px;background:rgb(243,243,244)"></div>
<div style="left:945px;top:1120px;width:33px;height:22px;background:rgb(244,244,245)"></div>
<div style="left:977px;top:1120px;width:33px;height:22px;background:rgb(240,240,241)"></div>
<div style="left:1010px;top:1120px;width:33px;height:22px;background:rgb(246,246,247)"></div>
<div style="left:1042px;top:1120px;width:33px;height:22px;background:rgb(240,240,241)"></div>
<div style="left:1075px;top:1120px;width:33px;height:22px;background:rgb(243,243,244)"></div>
<div style="left:1108px;top:1120px;width:33px;height:22px;background:rgb(242,242,243)"></div>
<div style="left:1140px;top:1120px;width:33px;height:22px;background:rgb(244,244,245)"></div>
<div style="left:1173px;top:1120px;width:33px;height:22px;background:rgb(244,244,245)"></div>
<div style="left:1205px;top:1120px;width:33px;height:22px;background:rgb(244,244,245)"></div>
<div style="left:1238px;top:1120px;width:33px;height:22px;background:rgb(244,244,245)"></div>
<div style="left:1271px;top:1120px;width:33px;height:22px;background:rgb(241,241,242)"></div>
<div style="left:1303px;top:1120px;width:33px;height:22px;background:rgb(245,245,246)"></div>
<div style="left:1336px;top:1120px;width:33px;height:22px;background:rgb(242,242,243)"></div>
<div style="left:1368px;top:1120px;width:33px;height:22px;background:rgb(243,243,244)"></div>
<div style="left:1401px;top:1120px;width:33px;height:22px;background:rgb(244,244,245)"></div>
<div style="left:1434px;top:1120px;width:33px;height:22px;background:rgb(244,244,245)"></div>
<div style="left:1466px;top:1120px;width:33px;height:22px;background:rgb(246,246,247)"></div>
<div style="left:1499px;top:1120px;width:33px;height:22px;background:rgb(243,243,244)"></div>
<div style="left:1531px;top:1120px;width:33px;height:22px;background:rgb(244,244,245)"></div>
<div style="left:1564px;top:1120px;width:33px;height:22px;background:rgb(241,241,242)"></div>
<div style="left:1597px;top:1120px;width:33px;height:22px;background:rgb(245,245,246)"></div>
<div style="left:1629px;top:1120px;width:33px;height:22px;background:rgb(244,244,245)"></div>
<div style="left:1662px;top:1120px;width:33px;height:22px;background:rgb(242,242,243)"></div>
<div style="left:1694px;top:1120px;width:29px;height:22px;background:rgb(244,244,245)"></div>
<div style="left:723px;top:988px;width:26px;height:33px;background:#f0f1f1"></div>
</div>
<!-- RIGHT PANEL -->
<div class="a" style="left:1780px;top:62px;width:566px;height:1080px;background:linear-gradient(180deg,#edf1fb 0px,#f5f7fd 35px,#fbfcfe 80px,#ffffff 140px);border-left:1px solid #e5e6eb"></div>
<svg style="left:1811px;top:80px" width="42" height="40" viewBox="0 0 42 40">
  <defs>
    <linearGradient id="lg3" x1="0" y1="0" x2="0" y2="1"><stop offset="0" stop-color="#f27ef2"/><stop offset="0.45" stop-color="#b24ef8"/><stop offset="1" stop-color="#6a72ff"/></linearGradient>
    <filter id="bl1" x="-50%" y="-50%" width="200%" height="200%"><feGaussianBlur stdDeviation="0.8"/></filter>
  </defs>
  <path d="M7 22 L10.5 21 L4.5 35 L1.5 34 Z" fill="#c8f0ff" filter="url(#bl1)"/>
  <path d="M29 18 L31 17.5 L38 34 L36 35 Z" fill="#ffd8fa" filter="url(#bl1)"/>
  <path d="M18.2 10.5 Q20.7 6.8 23.2 10.5 L36 32.5 Q38 36.7 33.5 36.7 H8 Q3.5 36.7 5.5 32.5 Z" fill="url(#lg3)"/>
  <ellipse cx="19.3" cy="20.3" rx="1.1" ry="2.1" fill="#fff" transform="rotate(-12 19.3 20.3)"/><ellipse cx="24.3" cy="20.3" rx="1.1" ry="2.1" fill="#fff" transform="rotate(-12 24.3 20.3)"/>
  <path d="M29 2.2 Q29.8 6.8 34.3 7.6 Q29.8 8.4 29 13 Q28.2 8.4 23.7 7.6 Q28.2 6.8 29 2.2Z" fill="#ec5ef0"/>
</svg>
<div class="t" style="left:1868px;top:92px;font-size:22.5px;color:#1d2129;font-weight:normal;-webkit-text-stroke:0.45px currentColor">智能助手</div>
<svg style="left:2299px;top:93px" width="17" height="17" viewBox="0 0 17 17"><path d="M1.5 1.5 L15.5 15.5 M15.5 1.5 L1.5 15.5" stroke="#1d2129" stroke-width="2.3"/></svg>
<div class="a" style="left:1820px;top:170px;width:201px;height:1px;background:#e5e6eb"></div>
<div class="a" style="left:2119px;top:170px;width:200px;height:1px;background:#e5e6eb"></div>
<div class="t" style="left:2044px;top:162px;font-size:17.5px;color:#86909c">新会话</div>

<div class="a" style="left:2077px;top:198px;width:253px;height:63px;background:#edf2fd;border-radius:14px 4px 14px 14px"></div>
<div class="t" style="left:2099px;top:220px;font-size:18.7px;color:#1d2129">对当前日志明细进行洞察</div>

<div class="a" id="msg" style="left:1810px;top:0;width:520px;font-size:18.4px;color:#222;line-height:28px">
  <div class="t" style="left:0;top:294px;font-size:18.4px">以下是对这些日志的洞察分析：</div>
  <div class="t" style="left:0;top:344px;font-size:18.4px;-webkit-text-stroke:0.5px currentColor">网络设备相关</div>
  <div class="t" style="left:9px;top:404px;font-size:18.4px">1. <b>BGP</b> <span style="-webkit-text-stroke:0.5px currentColor">邻居状态变化频繁</span></div>
  <div class="a" style="left:35px;top:449px;width:6px;height:6px;border-radius:3px;background:#1d2129"></div>
  <div class="t" style="left:52px;top:443px;font-size:18.4px;letter-spacing:0.35px">多个 BGP 邻居（如 1</div>
  <div class="a" style="left:228px;top:441px;width:88px;height:19px;background:linear-gradient(90deg,#f4f4f4,#f0f0f0 30%,#f1f1f1 70%,#f6f6f6)"></div>
  <div class="t" style="left:316px;top:443px;font-size:18.4px">、</div>
  <div class="a" style="left:46px;top:470px;width:314px;height:18px;background:linear-gradient(90deg,#f6f6f6,#ededed 12%,#eaeaea 40%,#ebebeb 80%,#f3f3f3)"></div>
  <div class="t" style="left:360px;top:471px;font-size:18.4px">等）在短时间内经</div>
  <div class="t" style="left:52px;top:499px;font-size:18.4px;letter-spacing:0.35px">历了 “Up” 和 “Down” 状态的多次切换。例如在 2025-03-</div>
  <div class="t" style="left:52px;top:527px;font-size:18.4px;letter-spacing:0.35px">20T02:35:25 左右，多个邻居因 BGP 通知接收和管理重</div>
  <div class="t" style="left:52px;top:555px;font-size:18.4px;letter-spacing:0.35px">置而变为 “Down” 状态，随后又有邻居变为 “Up” 状态。</div>
  <div class="t" style="left:52px;top:583px;font-size:18.4px;letter-spacing:0.35px">这可能表示网络中存在不稳定因素，如路由策略调整、</div>
  <div class="t" style="left:52px;top:611px;font-size:18.4px;letter-spacing:0.35px">邻居设备故障或者 BGP 协议配置问题。</div>
  <div class="a" style="left:35px;top:659px;width:6px;height:6px;border-radius:3px;background:#1d2129"></div>
  <div class="t" style="left:52px;top:652px;font-size:18.4px;letter-spacing:0.35px">NSR（Non - Stop Routing）功能在多个邻居上被禁用，</div>
  <div class="t" style="left:52px;top:680px;font-size:18.4px">原</div>
  <div class="t" style="left:340px;top:680px;font-size:18.4px">响网络的容错能力和</div>
  <div class="t" style="left:52px;top:708px;font-size:18.4px">稳</div>
  <div class="t" style="left:9px;top:749px;font-size:18.4px">2. <b>ASIC 相关</b></div>
  <div class="a" style="left:35px;top:796px;width:6px;height:6px;border-radius:3px;background:#1d2129"></div>
  <div class="a" style="left:92px;top:788px;width:418px;height:23px;background:#f0f1f3;border-radius:4px"></div>
  <div class="t" style="left:52px;top:790px;font-size:18.4px">在</div>
  <div class="t" style="left:353px;top:790px;font-family:'Liberation Mono',monospace;font-size:20px">TFORM - CIH -</div>
  <div class="a" style="left:51px;top:818px;width:353px;height:22px;background:#f0f1f3;border-radius:4px"></div>
  <div class="t" style="left:53px;top:820px;font-family:'Liberation Mono',monospace;font-size:20px">5</div>
  <div class="t" style="left:344px;top:820px;font-family:'Liberation Mono',monospace;font-size:20px">ANDLE</div>
  <div class="t" style="left:404px;top:820px;font-size:18.4px">错误，fia [5]</div>
  <div class="t" style="left:52px;top:850px;font-size:18.4px">发</div>
  <div class="t" style="left:346px;top:850px;font-size:18.4px">导致数据包临时丢</div>
</div>
<div class="a" style="left:1781px;top:878px;width:565px;height:40px;background:linear-gradient(180deg,rgba(255,255,255,0),#fff 70%)"></div>

<div class="a" style="left:2238px;top:925px;width:40px;height:41px;background:#fff;border:1px solid #e5e6eb;border-radius:6px"></div>
<svg style="left:2248px;top:935px" width="21" height="21" viewBox="0 0 21 21"><path d="M3.5 10.5 A7 7 0 1 0 5.5 5.5" fill="none" stroke="#1d2129" stroke-width="1.8"/><path d="M1.5 8.5 L3.5 11 L6 8.8" fill="none" stroke="#1d2129" stroke-width="1.8"/><path d="M10.5 6 V10.5 H14" fill="none" stroke="#1d2129" stroke-width="1.8"/></svg>
<div class="a" style="left:2290px;top:925px;width:40px;height:41px;background:#fff;border:1px solid #e5e6eb;border-radius:6px"></div>
<svg style="left:2299px;top:935px" width="21" height="21" viewBox="0 0 21 21"><defs><linearGradient id="lg4" x1="0" y1="0" x2="1" y2="0"><stop offset="0" stop-color="#0a72fa"/><stop offset="1" stop-color="#a55cf6"/></linearGradient></defs><path d="M10.5 2 A8.5 8.5 0 1 1 6 17.5 L2 19 L3 15 A8.5 8.5 0 0 1 10.5 2Z" fill="none" stroke="url(#lg4)" stroke-width="1.8" stroke-linejoin="round"/><path d="M10.5 6.5 V14.5 M6.5 10.5 H14.5" stroke="#0a72fa" stroke-width="1.8"/></svg>

<!-- INPUT BOX -->
<div class="a" style="left:1807px;top:983px;width:527px;height:158px;border-radius:13px;background:linear-gradient(90deg,#9ccbff,#cdbcff 70%,#dcbcff);padding:1px">
  <div style="width:100%;height:100%;background:#fff;border-radius:12px"></div>
</div>
<div class="t" style="left:1835px;top:1007px;font-size:19px;color:#0a72fa">日志洞察</div>
<div class="a" style="left:1825px;top:1089px;width:35px;height:35px;background:#fff;border:1px solid #e5e6eb;border-radius:5px"></div>
<svg style="left:1833px;top:1097px" width="19" height="19" viewBox="0 0 19 19"><g fill="none" stroke="#1d2129" stroke-width="1.7"><circle cx="13.5" cy="5" r="3"/><circle cx="5" cy="13.5" r="3"/><rect x="10.5" y="10.5" width="6" height="6" rx="2.5"/><path d="M2 3 L4.5 6 L8 1.5"/></g></svg>
<div class="a" style="left:1875px;top:1094px;width:108px;height:26px;background:#f2f3f5;border-radius:4px"></div>
<svg style="left:1890px;top:1097px" width="20" height="18" viewBox="0 0 20 18"><path d="M10 3 Q6 1 1.5 2 V15 Q6 14 10 16 Q14 14 18.5 15 V2 Q14 1 10 3 Z M10 3 V16" fill="none" stroke="#1d2129" stroke-width="1.7"/></svg>
<div class="t" style="left:1917px;top:1097px;font-size:17px;color:#1d2129">知识库</div>
<svg style="left:2288px;top:1097px" width="22" height="20" viewBox="0 0 22 20"><path d="M1.5 1.5 Q1 1 2 1.3 L20.5 9.2 Q21.8 10 20.5 10.8 L2 18.7 Q1 19 1.5 18.5 V11.3 H10 V8.7 H1.5 Z" fill="#b9bfc8"/></svg>
<div class="a" style="left:2313px;top:985px;width:67px;height:67px;border-radius:50%;background:#0a72fa"></div>
<svg style="left:2334px;top:1006px" width="14" height="24" viewBox="0 0 14 24"><path d="M13 3 L5 12 L13 21" fill="none" stroke="#fff" stroke-width="3.8"/></svg>

<!-- POPUP -->
<div class="a" style="left:1872px;top:671px;width:290px;height:412px;background:#fff;border:1px solid #e5e6eb;border-radius:8px;box-shadow:0 4px 12px rgba(0,0,0,0.06)"></div>
<div class="a" style="left:1873px;top:725px;width:288px;height:1px;background:#eceef1"></div>
<div class="t" style="left:1923px;top:692px;font-size:18px;color:#1d2129">全选</div>
<div class="a" style="left:1891px;top:691px;width:19px;height:19px;border:1px solid #dcdfe5;border-radius:3px;background:#fff"></div>
<div class="a" style="left:1891px;top:755px;width:19px;height:19px;border:1px solid #dcdfe5;border-radius:3px;background:#fff"></div>
<div class="t" style="left:1921px;top:755px;font-size:19px;color:#1d2129">d</div>
<div class="a" style="left:1891px;top:810px;width:19px;height:19px;border:1px solid #dcdfe5;border-radius:3px;background:#fff"></div>
<div class="t" style="left:1921px;top:810px;font-size:19px;color:#1d2129">d</div>
<div class="a" style="left:1891px;top:865px;width:19px;height:19px;border:1px solid #dcdfe5;border-radius:3px;background:#fff"></div>
<div class="t" style="left:1921px;top:865px;font-size:19px;color:#1d2129">ta</div>
<div class="a" style="left:1891px;top:920px;width:19px;height:19px;border:1px solid #dcdfe5;border-radius:3px;background:#fff"></div>
<div class="t" style="left:1921px;top:920px;font-size:19px;color:#1d2129">ya</div>
<div class="a" style="left:1891px;top:975px;width:19px;height:19px;border:1px solid #dcdfe5;border-radius:3px;background:#fff"></div>
<div class="t" style="left:1921px;top:975px;font-size:19px;color:#1d2129">d</div>
<div class="a" style="left:1891px;top:1031px;width:19px;height:19px;border:1px solid #dcdfe5;border-radius:3px;background:#fff"></div>
<div class="t" style="left:1921px;top:1031px;font-size:19px;color:#1d2129">te</div>
<div class="mz">
<div style="left:1933px;top:756px;width:21px;height:33px;background:rgb(243,243,243)"></div>
<div style="left:1954px;top:756px;width:33px;height:33px;background:rgb(236,236,236)"></div>
<div style="left:1987px;top:756px;width:33px;height:33px;background:rgb(243,243,243)"></div>
<div style="left:1933px;top:789px;width:21px;height:33px;background:rgb(249,249,249)"></div>
<div style="left:1954px;top:789px;width:33px;height:33px;background:rgb(248,248,248)"></div>
<div style="left:1987px;top:789px;width:33px;height:33px;background:rgb(249,249,249)"></div>
<div style="left:2020px;top:789px;width:32px;height:33px;background:rgb(250,250,250)"></div>
<div style="left:1933px;top:822px;width:21px;height:33px;background:rgb(242,242,242)"></div>
<div style="left:1954px;top:822px;width:33px;height:33px;background:rgb(239,239,239)"></div>
<div style="left:1987px;top:822px;width:33px;height:33px;background:rgb(234,234,234)"></div>
<div style="left:2020px;top:822px;width:32px;height:33px;background:rgb(246,246,246)"></div>
<div style="left:1933px;top:855px;width:21px;height:33px;background:rgb(251,251,251)"></div>
<div style="left:1954px;top:855px;width:33px;height:33px;background:rgb(250,250,250)"></div>
<div style="left:1987px;top:855px;width:33px;height:33px;background:rgb(251,251,251)"></div>
<div style="left:2020px;top:855px;width:32px;height:33px;background:rgb(252,252,252)"></div>
<div style="left:1933px;top:888px;width:21px;height:33px;background:rgb(243,243,243)"></div>
<div style="left:1954px;top:888px;width:33px;height:33px;background:rgb(236,236,236)"></div>
<div style="left:1987px;top:888px;width:33px;height:33px;background:rgb(235,235,235)"></div>
<div style="left:2020px;top:888px;width:32px;height:33px;background:rgb(237,237,237)"></div>
<div style="left:1933px;top:921px;width:21px;height:33px;background:rgb(245,245,245)"></div>
<div style="left:1954px;top:921px;width:33px;height:33px;background:rgb(241,241,241)"></div>
<div style="left:1987px;top:921px;width:33px;height:33px;background:rgb(242,242,242)"></div>
<div style="left:2020px;top:921px;width:32px;height:33px;background:rgb(242,242,242)"></div>
<div style="left:1933px;top:954px;width:21px;height:33px;background:rgb(248,248,248)"></div>
<div style="left:1954px;top:954px;width:33px;height:33px;background:rgb(246,246,246)"></div>
<div style="left:1987px;top:954px;width:33px;height:33px;background:rgb(246,246,246)"></div>
<div style="left:2020px;top:954px;width:32px;height:33px;background:rgb(248,248,248)"></div>
<div style="left:1933px;top:987px;width:21px;height:33px;background:rgb(243,243,243)"></div>
<div style="left:1954px;top:987px;width:33px;height:33px;background:rgb(236,236,236)"></div>
<div style="left:1987px;top:987px;width:33px;height:33px;background:rgb(236,236,236)"></div>
<div style="left:2020px;top:987px;width:32px;height:33px;background:rgb(247,247,247)"></div>
<div style="left:1933px;top:1020px;width:21px;height:33px;background:rgb(251,251,251)"></div>
<div style="left:1954px;top:1020px;width:33px;height:33px;background:rgb(250,250,250)"></div>
<div style="left:1987px;top:1020px;width:33px;height:33px;background:rgb(250,250,250)"></div>
<div style="left:2020px;top:1020px;width:32px;height:33px;background:rgb(252,252,252)"></div>
<div style="left:1933px;top:1053px;width:21px;height:3px;background:rgb(238,238,238)"></div>
<div style="left:1954px;top:1053px;width:33px;height:3px;background:rgb(238,238,238)"></div>
<div style="left:1987px;top:1053px;width:33px;height:3px;background:rgb(238,238,238)"></div>
<div style="left:2020px;top:1053px;width:32px;height:3px;background:rgb(240,240,240)"></div>
</div>
<!-- RED HIGHLIGHTS -->
<div class="a" style="left:1871px;top:677px;width:51px;height:392px;border:6.5px solid #fe3441;border-radius:11px"></div>
<div class="a" style="left:1869px;top:1088px;width:120px;height:38px;border:6.5px solid #fe3441;border-radius:11px"></div>
</body></html>
